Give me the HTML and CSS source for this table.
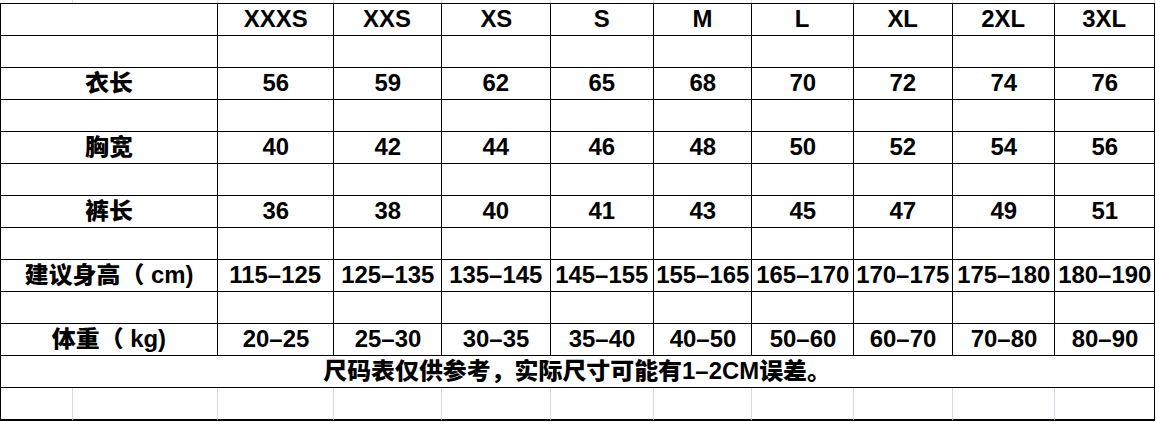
FILE: index.html
```html
<!DOCTYPE html>
<html lang="zh">
<head>
<meta charset="utf-8">
<title>尺码表</title>
<link rel="stylesheet" href="styles.css">
</head>
<body>
<div class="sheet">
  <div class="g"></div><div class="g"></div><div class="g"></div><div class="g"></div><div class="g"></div><div class="g"></div><div class="g"></div><div class="g"></div><div class="g"></div><div class="g"></div><div class="g"></div>

  <div class="c top first label"></div>
  <div class="c top"><span class="t">XXXS</span></div>
  <div class="c top"><span class="t">XXS</span></div>
  <div class="c top"><span class="t">XS</span></div>
  <div class="c top"><span class="t">S</span></div>
  <div class="c top"><span class="t">M</span></div>
  <div class="c top"><span class="t">L</span></div>
  <div class="c top"><span class="t">XL</span></div>
  <div class="c top"><span class="t">2XL</span></div>
  <div class="c top"><span class="t">3XL</span></div>

  <div class="c first label"></div><div class="c"></div><div class="c"></div><div class="c"></div><div class="c"></div><div class="c"></div><div class="c"></div><div class="c"></div><div class="c"></div><div class="c"></div>

  <div class="c first label"><span class="t">衣长</span></div>
  <div class="c"><span class="t">56</span></div>
  <div class="c"><span class="t">59</span></div>
  <div class="c"><span class="t">62</span></div>
  <div class="c"><span class="t">65</span></div>
  <div class="c"><span class="t">68</span></div>
  <div class="c"><span class="t">70</span></div>
  <div class="c"><span class="t">72</span></div>
  <div class="c"><span class="t">74</span></div>
  <div class="c"><span class="t">76</span></div>

  <div class="c first label"></div><div class="c"></div><div class="c"></div><div class="c"></div><div class="c"></div><div class="c"></div><div class="c"></div><div class="c"></div><div class="c"></div><div class="c"></div>

  <div class="c first label"><span class="t">胸宽</span></div>
  <div class="c"><span class="t">40</span></div>
  <div class="c"><span class="t">42</span></div>
  <div class="c"><span class="t">44</span></div>
  <div class="c"><span class="t">46</span></div>
  <div class="c"><span class="t">48</span></div>
  <div class="c"><span class="t">50</span></div>
  <div class="c"><span class="t">52</span></div>
  <div class="c"><span class="t">54</span></div>
  <div class="c"><span class="t">56</span></div>

  <div class="c first label"></div><div class="c"></div><div class="c"></div><div class="c"></div><div class="c"></div><div class="c"></div><div class="c"></div><div class="c"></div><div class="c"></div><div class="c"></div>

  <div class="c first label"><span class="t">裤长</span></div>
  <div class="c"><span class="t">36</span></div>
  <div class="c"><span class="t">38</span></div>
  <div class="c"><span class="t">40</span></div>
  <div class="c"><span class="t">41</span></div>
  <div class="c"><span class="t">43</span></div>
  <div class="c"><span class="t">45</span></div>
  <div class="c"><span class="t">47</span></div>
  <div class="c"><span class="t">49</span></div>
  <div class="c"><span class="t">51</span></div>

  <div class="c first label"></div><div class="c"></div><div class="c"></div><div class="c"></div><div class="c"></div><div class="c"></div><div class="c"></div><div class="c"></div><div class="c"></div><div class="c"></div>

  <div class="c first label"><span class="t">建议身高（ cm)</span></div>
  <div class="c"><span class="t">115–125</span></div>
  <div class="c"><span class="t">125–135</span></div>
  <div class="c"><span class="t">135–145</span></div>
  <div class="c"><span class="t">145–155</span></div>
  <div class="c"><span class="t">155–165</span></div>
  <div class="c"><span class="t">165–170</span></div>
  <div class="c"><span class="t">170–175</span></div>
  <div class="c"><span class="t">175–180</span></div>
  <div class="c"><span class="t">180–190</span></div>

  <div class="c first label"></div><div class="c"></div><div class="c"></div><div class="c"></div><div class="c"></div><div class="c"></div><div class="c"></div><div class="c"></div><div class="c"></div><div class="c"></div>

  <div class="c first label"><span class="t">体重（ kg)</span></div>
  <div class="c"><span class="t">20–25</span></div>
  <div class="c"><span class="t">25–30</span></div>
  <div class="c"><span class="t">30–35</span></div>
  <div class="c"><span class="t">35–40</span></div>
  <div class="c"><span class="t">40–50</span></div>
  <div class="c"><span class="t">50–60</span></div>
  <div class="c"><span class="t">60–70</span></div>
  <div class="c"><span class="t">70–80</span></div>
  <div class="c"><span class="t">80–90</span></div>

  <div class="c first note"><span class="t">尺码表仅供参考，实际尺寸可能有1–2CM误差。</span></div>

  <div class="c first last lt"></div><div class="c last lt"></div><div class="c last lt"></div><div class="c last lt"></div><div class="c last lt"></div><div class="c last lt"></div><div class="c last lt"></div><div class="c last lt"></div><div class="c last lt"></div><div class="c last lt"></div><div class="c last end"></div>
</div>
</body>
</html>
```

FILE: styles.css
```css
* { box-sizing: border-box; }

html, body {
  margin: 0;
  padding: 0;
  background: #ffffff;
}

body {
  width: 1156px;
  height: 422px;
  overflow: hidden;
  font-family: "Liberation Sans", Arial, "Noto Sans CJK SC", sans-serif;
  font-weight: 900;
  font-size: 23px;
  color: #000000;
}

.sheet {
  margin-left: 1px;
  display: grid;
  grid-template-columns: 72px 145px 116px 108px 109px 103px 98px 102px 99px 102px 100px;
  grid-template-rows: 3px 33px repeat(10, 32px) 32px 33px;
}

.g {
  border-right: 1px solid #d4d9e3;
}

.c {
  display: flex;
  align-items: center;
  justify-content: center;
  border-right: 1px solid #000000;
  border-bottom: 1px solid #000000;
  white-space: nowrap;
  overflow: visible;
}

.top { border-top: 1px solid #000000; }

.first { border-left: 1px solid #000000; margin-left: -1px; }

.label { grid-column: span 2; }

.note { grid-column: span 11; }

.t {
  display: inline-block;
  transform: scaleX(1.04);
  line-height: 1;
}

.last { border-bottom: 2px solid #000000; }

.lt { border-right-color: #d4d9e3; }

.end { border-right-color: #000000; }
```
